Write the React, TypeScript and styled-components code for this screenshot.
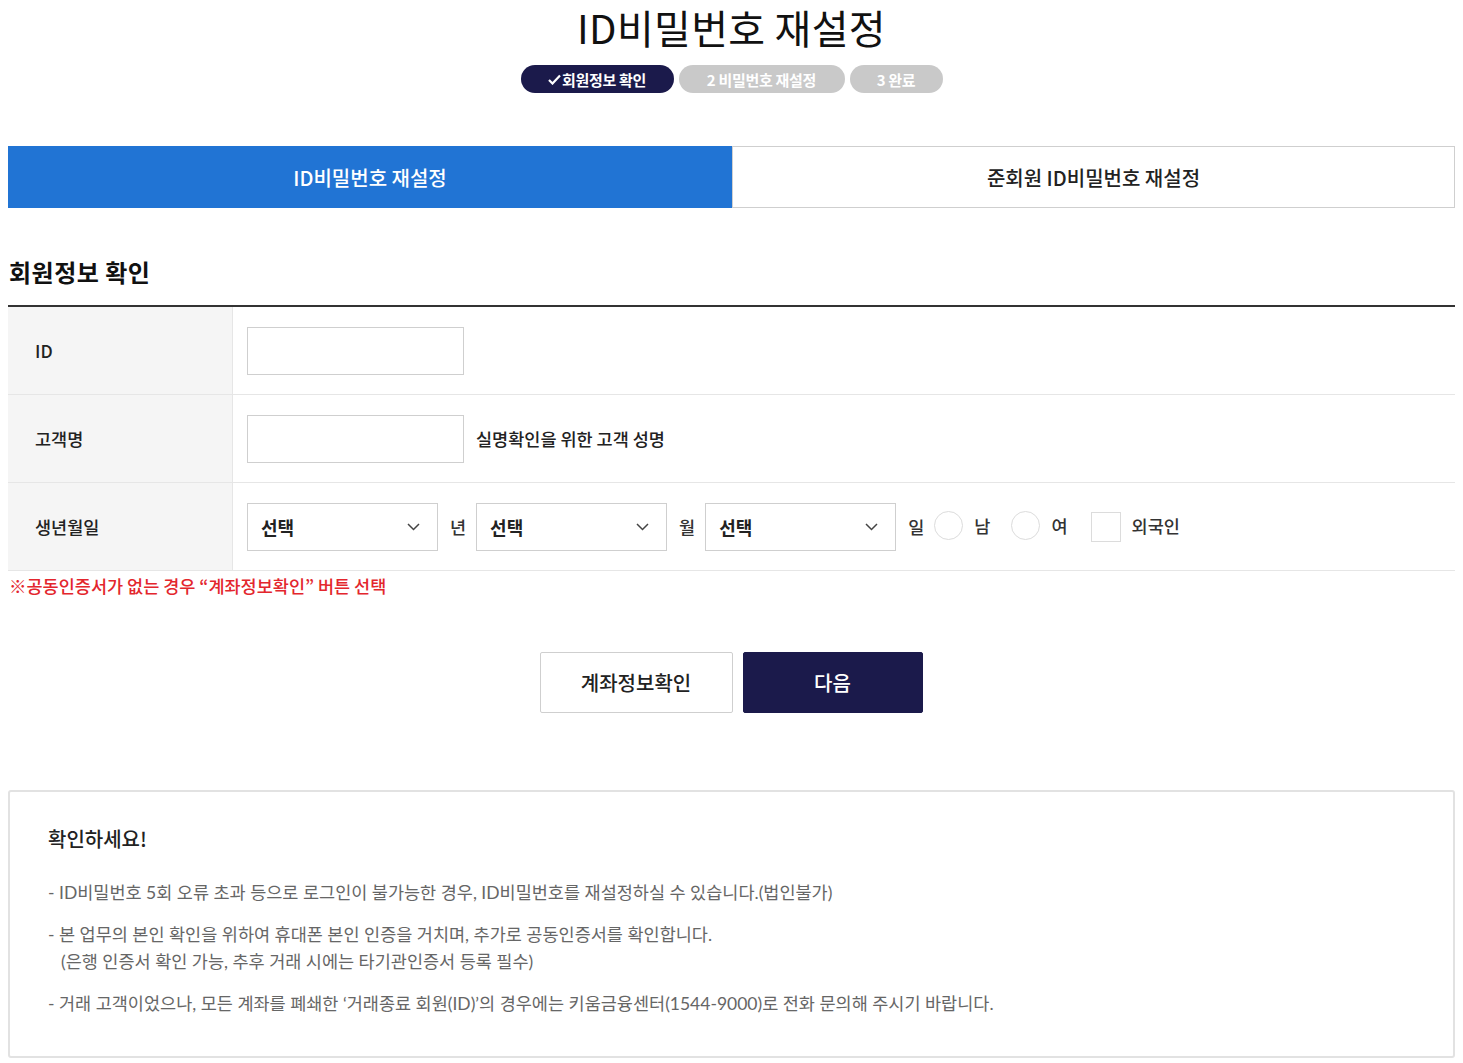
import styled, { createGlobalStyle } from "styled-components";

const GlobalStyle = createGlobalStyle`
  html, body {
    margin: 0;
    padding: 0;
    background: #fff;
  }
  body {
    font-family: "Noto Sans CJK KR", "Noto Sans", sans-serif;
    color: #222;
  }
  * {
    box-sizing: border-box;
  }
`;

const Page = styled.div`
  width: 1447px;
  margin: 0 8px;
`;

const Title = styled.h1`
  margin: 0;
  padding-top: 4px;
  font-size: 40px;
  line-height: 46px;
  font-weight: 400;
  text-align: center;
  color: #111;
  letter-spacing: 0.3px;
`;

const Steps = styled.ol`
  list-style: none;
  margin: 15px 0 0;
  padding: 0;
  display: flex;
  justify-content: center;
  gap: 5px;
`;

const Step = styled.li<{ $active?: boolean; $w: number }>`
  width: ${(p) => p.$w}px;
  height: 28px;
  border-radius: 14px;
  background: ${(p) => (p.$active ? "#1b1a4b" : "#c9c9c9")};
  color: #fff;
  font-size: 15px;
  font-weight: 700;
  display: flex;
  align-items: center;
  justify-content: center;
  gap: 1px;
  letter-spacing: -0.3px;
`;

const Tabs = styled.div`
  margin-top: 53px;
  display: grid;
  grid-template-columns: 724px 1fr;
  height: 62px;
`;

const Tab = styled.div<{ $active?: boolean }>`
  display: flex;
  align-items: center;
  justify-content: center;
  font-size: 20px;
  font-weight: 500;
  background: ${(p) => (p.$active ? "#2174d4" : "#fff")};
  color: ${(p) => (p.$active ? "#fff" : "#222")};
  border: ${(p) => (p.$active ? "none" : "1px solid #cfcfcf")};
`;

const SectionTitle = styled.h2`
  margin: 49px 0 0;
  padding-left: 1px;
  font-size: 24px;
  line-height: 30px;
  font-weight: 700;
  color: #111;
  letter-spacing: 0.5px;
`;

const Table = styled.div`
  margin-top: 18px;
  border-top: 2px solid #333;
`;

const Row = styled.div`
  display: grid;
  grid-template-columns: 225px 1fr;
  height: 88px;
  border-bottom: 1px solid #e6e6e6;
`;

const Label = styled.div`
  background: #f5f5f5;
  border-right: 1px solid #e6e6e6;
  padding-left: 27px;
  display: flex;
  align-items: center;
  font-size: 17.5px;
  font-weight: 500;
  color: #222;
`;

const Cell = styled.div`
  padding-left: 14px;
  display: flex;
  align-items: center;
`;

const TextInput = styled.input`
  width: 217px;
  height: 48px;
  border: 1px solid #cfcfcf;
  padding: 0 12px;
  font-size: 16px;
  font-family: inherit;
  outline: none;
`;

const Help = styled.span`
  margin-left: 12px;
  font-size: 17.5px;
  font-weight: 500;
  color: #222;
`;

const SelectBox = styled.div`
  width: 191px;
  height: 48px;
  border: 1px solid #cfcfcf;
  padding: 0 17px 0 13px;
  display: flex;
  align-items: center;
  justify-content: space-between;
  font-size: 18px;
  font-weight: 600;
  color: #222;
`;

const Unit = styled.span`
  padding: 0 10px 0 12px;
  font-size: 17.5px;
  font-weight: 500;
  color: #333;
`;

const Radio = styled.span`
  width: 29px;
  height: 29px;
  border-radius: 50%;
  border: 1px solid #dcdcdc;
  background: #fff;
  margin-top: -3px;
`;

const Check = styled.span`
  width: 30px;
  height: 30px;
  border: 1px solid #dcdcdc;
  background: #fff;
`;

const OptionText = styled.span<{ $after: number }>`
  padding: 0 ${(p) => p.$after}px 0 11px;
  font-size: 17.5px;
  font-weight: 500;
  color: #333;
  margin-top: -3px;
`;

const Note = styled.p`
  margin: 4px 0 0;
  padding-left: 1px;
  font-size: 17.5px;
  line-height: 22px;
  font-weight: 500;
  color: #e3262d;
`;

const Buttons = styled.div`
  margin-top: 55px;
  display: flex;
  justify-content: center;
  gap: 10px;
  padding-right: 1px;
`;

const Button = styled.button<{ $primary?: boolean; $w: number }>`
  width: ${(p) => p.$w}px;
  height: 61px;
  border-radius: 2px;
  font-family: inherit;
  font-size: 20px;
  font-weight: 500;
  cursor: pointer;
  background: ${(p) => (p.$primary ? "#1b1a4b" : "#fff")};
  color: ${(p) => (p.$primary ? "#fff" : "#222")};
  border: 1px solid ${(p) => (p.$primary ? "#1b1a4b" : "#cfcfcf")};
`;

const Notice = styled.div`
  margin-top: 77px;
  border: 2px solid #e2e2e2;
  border-radius: 3px;
  padding: 34px 38px 39px;
`;

const NoticeTitle = styled.h3`
  margin: 0;
  font-size: 20px;
  line-height: 26px;
  font-weight: 500;
  color: #222;
`;

const NoticeList = styled.ul`
  list-style: none;
  margin: 27px 0 0;
  padding: 0;
  display: flex;
  flex-direction: column;
  gap: 15px;
`;

const NoticeItem = styled.li`
  font-family: Lato, "Noto Sans CJK KR", sans-serif;
  font-size: 17.5px;
  line-height: 27px;
  color: #666;
  padding-left: 13px;
  text-indent: -13px;
`;

function Chevron() {
  return (
    <svg width="13" height="8" viewBox="0 0 13 8">
      <polyline points="1,1 6.5,6.5 12,1" fill="none" stroke="#444" strokeWidth="1.5" />
    </svg>
  );
}

function CheckMark() {
  return (
    <svg width="13" height="11" viewBox="0 0 13 11">
      <polyline points="1,6 4.5,9.5 12,1.5" fill="none" stroke="#fff" strokeWidth="2.2" />
    </svg>
  );
}

function App() {
  return (
    <Page>
      <GlobalStyle />
      <Title>ID비밀번호 재설정</Title>
      <Steps>
        <Step $active $w={153}>
          <CheckMark />
          회원정보 확인
        </Step>
        <Step $w={166}>2 비밀번호 재설정</Step>
        <Step $w={93}>3 완료</Step>
      </Steps>

      <Tabs>
        <Tab $active>ID비밀번호 재설정</Tab>
        <Tab>준회원 ID비밀번호 재설정</Tab>
      </Tabs>

      <SectionTitle>회원정보 확인</SectionTitle>
      <Table>
        <Row>
          <Label>ID</Label>
          <Cell>
            <TextInput />
          </Cell>
        </Row>
        <Row>
          <Label>고객명</Label>
          <Cell>
            <TextInput />
            <Help>실명확인을 위한 고객 성명</Help>
          </Cell>
        </Row>
        <Row>
          <Label>생년월일</Label>
          <Cell>
            <SelectBox>
              선택
              <Chevron />
            </SelectBox>
            <Unit>년</Unit>
            <SelectBox>
              선택
              <Chevron />
            </SelectBox>
            <Unit>월</Unit>
            <SelectBox>
              선택
              <Chevron />
            </SelectBox>
            <Unit>일</Unit>
            <Radio />
            <OptionText $after={21}>남</OptionText>
            <Radio />
            <OptionText $after={23}>여</OptionText>
            <Check />
            <OptionText $after={0}>외국인</OptionText>
          </Cell>
        </Row>
      </Table>
      <Note>※공동인증서가 없는 경우 “계좌정보확인” 버튼 선택</Note>

      <Buttons>
        <Button $w={193}>계좌정보확인</Button>
        <Button $primary $w={180}>
          다음
        </Button>
      </Buttons>

      <Notice>
        <NoticeTitle>확인하세요!</NoticeTitle>
        <NoticeList>
          <NoticeItem>
            - ID비밀번호 5회 오류 초과 등으로 로그인이 불가능한 경우, ID비밀번호를 재설정하실 수 있습니다.(법인불가)
          </NoticeItem>
          <NoticeItem>
            - 본 업무의 본인 확인을 위하여 휴대폰 본인 인증을 거치며, 추가로 공동인증서를 확인합니다.
            <br />
            (은행 인증서 확인 가능, 추후 거래 시에는 타기관인증서 등록 필수)
          </NoticeItem>
          <NoticeItem>
            - 거래 고객이었으나, 모든 계좌를 폐쇄한 ‘거래종료 회원(ID)’의 경우에는 키움금융센터(1544-9000)로 전화 문의해 주시기 바랍니다.
          </NoticeItem>
        </NoticeList>
      </Notice>
    </Page>
  );
}

export default App;
